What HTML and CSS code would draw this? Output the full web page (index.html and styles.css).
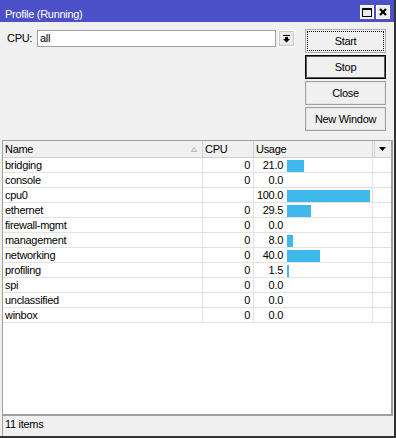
FILE: index.html
```
<!DOCTYPE html>
<html>
<head>
<meta charset="utf-8">
<link rel="stylesheet" href="styles.css">
</head>
<body>
<div class="window">
  <div class="titlebar">
    <span class="title">Profile (Running)</span>
    <div class="tb-btns">
      <span class="tb-btn"><svg width="10" height="9" viewBox="0 0 10 9"><rect x="0.5" y="0.5" width="9" height="8" fill="none" stroke="#000"/><rect x="0" y="0" width="10" height="2" fill="#000"/></svg></span>
      <span class="tb-btn"><svg width="8" height="8" viewBox="0 0 8 8"><path d="M1 1L7 7M7 1L1 7" stroke="#000" stroke-width="2"/></svg></span>
    </div>
  </div>
  <div class="top">
    <div class="cpu-row">
      <span class="cpu-label">CPU:</span>
      <div class="input">all</div>
      <div class="dd-btn"><svg width="7" height="8" viewBox="0 0 7 8"><rect x="0" y="0" width="7" height="1" fill="#000"/><rect x="2" y="2" width="3" height="2" fill="#000"/><polygon points="0,4 7,4 3.5,7.5" fill="#000"/></svg></div>
    </div>
    <div class="buttons">
      <button class="btn btn-focus">Start</button>
      <button class="btn btn-default">Stop</button>
      <button class="btn">Close</button>
      <button class="btn">New Window</button>
    </div>
  </div>
  <div class="table">
    <div class="thead">
      <div class="th th-name"><span>Name</span><svg width="6" height="5" viewBox="0 0 6 5"><polygon points="0.5,4.5 5.5,4.5 3,0.5" fill="none" stroke="#b4b4b4"/></svg></div>
      <div class="th">CPU</div>
      <div class="th">Usage</div>
      <div class="th th-menu"><svg width="7" height="4" viewBox="0 0 7 4"><polygon points="0,0 7,0 3.5,4" fill="#000"/></svg></div>
    </div>
    <div class="row"><div class="td">bridging</div><div class="td num-cell">0</div><div class="td usage"><span class="num">21.0</span><span class="bar" style="width:17px"></span></div><div class="td last"></div></div>
    <div class="row"><div class="td">console</div><div class="td num-cell">0</div><div class="td usage"><span class="num">0.0</span></div><div class="td last"></div></div>
    <div class="row"><div class="td">cpu0</div><div class="td num-cell"></div><div class="td usage"><span class="num">100.0</span><span class="bar" style="width:83px"></span></div><div class="td last"></div></div>
    <div class="row"><div class="td">ethernet</div><div class="td num-cell">0</div><div class="td usage"><span class="num">29.5</span><span class="bar" style="width:24px"></span></div><div class="td last"></div></div>
    <div class="row"><div class="td">firewall-mgmt</div><div class="td num-cell">0</div><div class="td usage"><span class="num">0.0</span></div><div class="td last"></div></div>
    <div class="row"><div class="td">management</div><div class="td num-cell">0</div><div class="td usage"><span class="num">8.0</span><span class="bar" style="width:6px"></span></div><div class="td last"></div></div>
    <div class="row"><div class="td">networking</div><div class="td num-cell">0</div><div class="td usage"><span class="num">40.0</span><span class="bar" style="width:33px"></span></div><div class="td last"></div></div>
    <div class="row"><div class="td">profiling</div><div class="td num-cell">0</div><div class="td usage"><span class="num">1.5</span><span class="bar" style="width:2px"></span></div><div class="td last"></div></div>
    <div class="row"><div class="td">spi</div><div class="td num-cell">0</div><div class="td usage"><span class="num">0.0</span></div><div class="td last"></div></div>
    <div class="row"><div class="td">unclassified</div><div class="td num-cell">0</div><div class="td usage"><span class="num">0.0</span></div><div class="td last"></div></div>
    <div class="row"><div class="td">winbox</div><div class="td num-cell">0</div><div class="td usage"><span class="num">0.0</span></div><div class="td last"></div></div>
  </div>
  <div class="status">11 items</div>
</div>
</body>
</html>
```
FILE: styles.css
```
* { box-sizing: border-box; }
body {
  margin: 0;
  font-family: "Liberation Sans", Arial, sans-serif;
  font-size: 11px;
  letter-spacing: -0.3px;
  color: #000;
  background: #fff;
}
.window {
  width: 396px;
  height: 438px;
  background: #f0f0f0;
  border-right: 2px solid #333;
  border-bottom: 2px solid #333;
  display: flex;
  flex-direction: column;
}
.titlebar {
  height: 22px;
  flex: none;
  background: #4b50c8;
  color: #fff;
  display: flex;
  align-items: flex-start;
  justify-content: space-between;
  padding: 0 4px 0 5px;
}
.title { padding-top: 7px; line-height: 14px; }
.tb-btns { display: flex; gap: 2px; margin-top: 5px; }
.tb-btn {
  width: 14px;
  height: 14px;
  background: #ebebeb;
  border: 1px solid #fff;
  display: flex;
  align-items: center;
  justify-content: center;
}
.tb-btn svg { display: block; }
.top {
  height: 118px;
  flex: none;
  display: flex;
  padding: 7px 8px 0 7px;
}
.cpu-row { display: flex; align-items: flex-start; margin-top: 1px; }
.cpu-label { width: 30px; line-height: 17px; }
.input {
  width: 239px;
  height: 17px;
  background: #fff;
  border: 1px solid #a0a0a0;
  padding-left: 2px;
  line-height: 15px;
}
.dd-btn {
  width: 17px;
  height: 17px;
  margin-left: 2px;
  background: #ebebeb;
  border: 1px solid #fff;
  outline: 1px solid #c8c8c8;
  outline-offset: -2px;
  display: flex;
  align-items: center;
  justify-content: center;
}
.dd-btn svg { display: block; }
.buttons {
  margin-left: auto;
  width: 81px;
  display: flex;
  flex-direction: column;
  gap: 2px;
}
.btn {
  height: 24px;
  padding: 0;
  background: #f0f0f0;
  border: 1px solid #a0a0a0;
  box-shadow: inset 0 0 0 1px #e4e4e4;
  font: inherit;
  letter-spacing: -0.3px;
  color: #000;
  line-height: 22px;
  text-align: center;
}
.btn-focus {
  border-color: #adadad;
  box-shadow: none;
  outline: 1px dotted #000;
  outline-offset: -3px;
}
.btn-default {
  border: 1px solid #000;
  box-shadow: inset 0 0 0 1px #5a5a5a;
}
.table {
  flex: none;
  height: 276px;
  margin: 0 1px 0 2px;
  background: #fff;
  border-top: 1px solid #a0a0a0;
  border-left: 1px solid #a0a0a0;
  border-right: 2px solid #a0a0a0;
  border-bottom: 2px solid #a0a0a0;
}
.thead, .row {
  display: grid;
  grid-template-columns: 200px 51px 119px 1fr;
}
.thead {
  height: 17px;
  background: #f0f0f0;
  border-bottom: 1px solid #cfcfcf;
}
.th {
  border-right: 1px solid #d2d2d2;
  padding: 1px 0 0 2px;
  line-height: 15px;
}
.th-name {
  display: flex;
  align-items: center;
  justify-content: space-between;
  padding: 0 5px 0 2px;
}
.th-name svg { display: block; margin-top: 1px; }
.th-menu {
  border-right: none;
  margin-left: 1px;
  border-left: 1px solid #d2d2d2;
  padding: 0;
  display: flex;
  align-items: center;
  justify-content: center;
}
.th-menu svg { display: block; margin-left: -1px; }
.row {
  height: 15px;
  border-bottom: 1px solid #e3e3e3;
  line-height: 14px;
}
.td {
  border-right: 1px solid #e3e3e3;
  padding-left: 2px;
  white-space: nowrap;
}
.td.last { border-right: none; }
.num-cell { text-align: right; padding: 0 3px 0 0; }
.usage { display: flex; padding-left: 0; }
.num { width: 29px; text-align: right; flex: none; }
.bar {
  flex: none;
  height: 12px;
  margin: 2px 0 0 4px;
  background: #3fb8ec;
}
.status {
  height: 20px;
  flex: none;
  margin-left: 2px;
  border-left: 1px solid #a0a0a0;
  padding-left: 2px;
  line-height: 17px;
}
```
